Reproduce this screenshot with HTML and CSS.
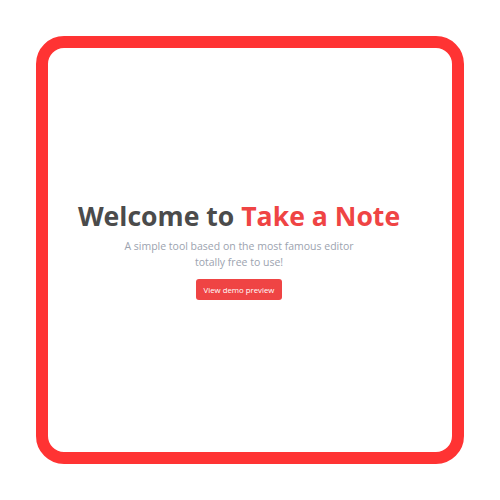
FILE: index.html
```html
<!DOCTYPE html>
<html>
<head>
<meta charset="utf-8">
<link rel="stylesheet" href="styles.css">
</head>
<body>
<div class="frame">
  <main class="hero">
    <h1 class="title">Welcome to <span class="accent">Take a Note</span></h1>
    <p class="subtitle">A simple tool based on the most famous editor<br>totally free to use!</p>
    <button class="cta">View demo preview</button>
  </main>
</div>
</body>
</html>
```
FILE: styles.css
```css
html, body {
  margin: 0;
  padding: 0;
  background: #ffffff;
}
body {
  width: 500px;
  height: 500px;
  padding: 36px;
  box-sizing: border-box;
  font-family: "Open Sans", "Noto Sans", sans-serif;
}
.frame {
  width: 428px;
  height: 428px;
  box-sizing: border-box;
  border: 12px solid #ff3333;
  border-radius: 28px;
  display: flex;
  align-items: center;
  justify-content: center;
  padding-right: 22px;
}
.hero {
  display: flex;
  flex-direction: column;
  align-items: center;
  text-align: center;
}
.title {
  margin: 0;
  font-size: 26.6px;
  font-weight: 700;
  color: #4b4b4b;
  line-height: 32px;
}
.accent {
  color: #ef4444;
}
.subtitle {
  margin: 6px 0 0;
  font-size: 10.5px;
  line-height: 16px;
  color: #9ca3af;
}
.cta {
  margin-top: 9px;
  width: 86px;
  height: 21px;
  padding: 0;
  border: none;
  border-radius: 3px;
  background: #ef4444;
  color: #ffffff;
  font-family: "Open Sans", sans-serif;
  font-size: 7.8px;
}
```
